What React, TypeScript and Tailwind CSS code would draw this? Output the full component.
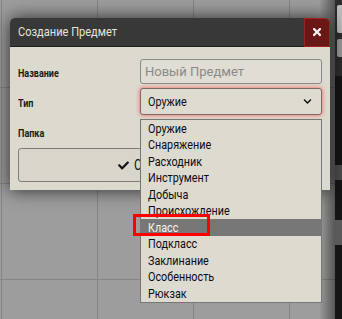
import React from "react";
import { FaTimes, FaChevronDown, FaCheck } from "react-icons/fa";

const items = [
  "Оружие",
  "Снаряжение",
  "Расходник",
  "Инструмент",
  "Добыча",
  "Происхождение",
  "Класс",
  "Подкласс",
  "Заклинание",
  "Особенность",
  "Рюкзак",
];

const regular = { fontFamily: 'Roboto, "Liberation Sans", sans-serif' };

export default function App() {
  return (
    <div className="relative w-[342px] h-[319px] overflow-hidden flex bg-[#111]" style={regular}>
      {/* canvas */}
      <div className="relative flex-1 h-full bg-[#9d9d9d] bg-[linear-gradient(to_right,#858585_1px,transparent_1px),linear-gradient(to_bottom,#858585_1px,transparent_1px)] bg-[size:96px_96px] bg-[position:1px_-9px]">
        <div className="absolute inset-y-0 right-0 w-[16px] bg-[linear-gradient(to_right,transparent,rgba(0,0,0,0.45))]" />
      </div>
      {/* sidebar strip */}
      <div className="w-[7px] h-full flex flex-col bg-[#151515]">
        <div className="h-[76px] bg-[#2c2c2c] flex flex-col gap-[6px] pt-[5px] pl-[2px]">
          <div className="h-[28px] bg-[#bdbdbd] rounded-l-[2px]" />
          <div className="h-[18px] bg-[#9a9a9a] rounded-l-[2px]" />
        </div>
        <div className="mt-[89px] h-[15px] bg-[#4d4d4d]" />
        <div className="mt-[40px] h-[25px] bg-[#5a5a5a]" />
      </div>

      {/* dialog */}
      <div className="absolute left-[10px] top-[18px] w-[320px] rounded-t-[5px] shadow-[0_0_18px_rgba(0,0,0,0.75)]">
        <div className="h-[29px] flex items-center justify-between bg-[#383838] rounded-t-[5px] border-b border-[#1e1e1e]">
          <span className="ml-[8px] inline-block origin-left scale-x-[0.85] text-[13px] text-[#e6e3da] whitespace-nowrap">
            Создание Предмет
          </span>
          <div className="w-[26px] h-[29px] flex items-center justify-center bg-[#6a1717] border border-[#a3201f] rounded-tr-[5px]">
            <FaTimes className="text-[#f4f4f4] w-[12px] h-[12px]" />
          </div>
        </div>
        <div className="bg-[#dcd9ce] px-[8px] pt-[12px] pb-[8px] flex flex-col">
          <div className="flex items-center h-[25px]">
            <div className="w-[122px]">
              <span className="inline-block origin-left scale-x-[0.82] text-[11px] font-bold text-[#1b1a16]">Название</span>
            </div>
            <div className="w-[182px] h-[25px] rounded-[3px] border border-[#8a8a86] bg-[#e0ddd4] flex items-center pl-[4px]">
              <span className="text-[13px] text-[#8b8a85]">Новый Предмет</span>
            </div>
          </div>
          <div className="flex items-center h-[27px] mt-[4px]">
            <div className="w-[122px]">
              <span className="inline-block origin-left scale-x-[0.82] text-[11px] font-bold text-[#1b1a16]">Тип</span>
            </div>
            <div className="w-[182px] h-[27px] rounded-[3px] border border-[#7d6a68] bg-[#dedbd1] shadow-[0_0_4px_#ff5a5a] flex items-center justify-between pl-[7px] pr-[9px]">
              <span className="inline-block origin-left scale-x-[0.83] text-[13px] text-[#111]">Оружие</span>
              <FaChevronDown className="w-[9px] h-[9px] text-[#111]" />
            </div>
          </div>
          <div className="flex items-center h-[26px] mt-[4px]">
            <div className="w-[122px]">
              <span className="inline-block origin-left scale-x-[0.82] text-[11px] font-bold text-[#1b1a16]">Папка</span>
            </div>
            <div className="w-[182px] h-[26px] rounded-[3px] border border-[#8a8a86] bg-[#dedbd1]" />
          </div>
          <div className="mt-[3px] h-[34px] w-[304px] rounded-[3px] border border-[#7d7c78] bg-[#d8d5ca] flex items-center pl-[99px] gap-[5px]">
            <FaCheck className="w-[11px] h-[11px] text-[#111]" />
            <span className="inline-block origin-left scale-x-[0.85] text-[14px] text-[#111]">Создать</span>
          </div>
        </div>
      </div>

      {/* dropdown list */}
      <div className="absolute left-[140px] top-[119px] w-[182px] h-[184px] border border-[#767676] bg-[#dddbd0] flex flex-col">
        {items.map((it) => (
          <div
            key={it}
            className={
              "h-[16.5px] flex items-center pl-[7px] " +
              (it === "Класс" ? "bg-[#777777] text-[#f3f3f3]" : "text-[#0b0b14]")
            }
          >
            <span className="inline-block origin-left scale-x-[0.83] text-[13px] whitespace-nowrap">{it}</span>
          </div>
        ))}
      </div>

      {/* red highlight */}
      <div className="absolute left-[133px] top-[214px] w-[77px] h-[22px] border-[3px] border-[#ff0000]" />
    </div>
  );
}
